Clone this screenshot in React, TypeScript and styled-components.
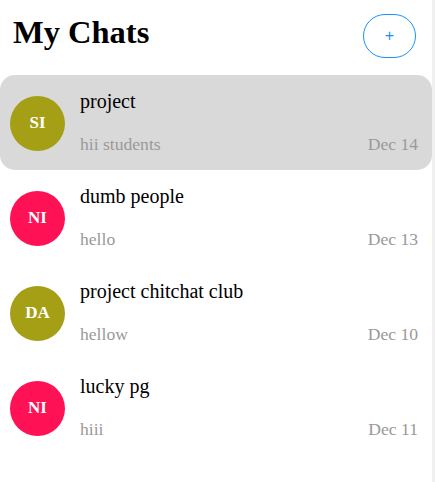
import React from "react";
import styled, { createGlobalStyle } from "styled-components";

const GlobalStyle = createGlobalStyle`
  html, body { margin: 0; padding: 0; background: #fff; }
  body { font-family: "Liberation Serif", "Times New Roman", serif; }
  * { box-sizing: border-box; }
`;

const Panel = styled.div`
  width: 435px;
  height: 482px;
  border-right: 3px solid #f0f0f0;
  display: flex;
  flex-direction: column;
`;

const Header = styled.div`
  height: 75px;
  display: flex;
  justify-content: space-between;
  align-items: flex-start;
  padding: 14px 16px 0 13px;
`;

const Title = styled.h1`
  margin: 0;
  font-size: 32.5px;
  font-weight: bold;
  line-height: 36px;
  color: #000;
`;

const AddButton = styled.button`
  width: 53px;
  height: 44px;
  border: 1px solid #1890ff;
  border-radius: 22px;
  background: #fff;
  color: #1890ff;
  font-family: "Liberation Sans", Arial, sans-serif;
  font-size: 16px;
  line-height: 1;
  padding: 0;
  display: flex;
  align-items: center;
  justify-content: center;
  cursor: pointer;
`;

const List = styled.div`
  display: flex;
  flex-direction: column;
`;

const Row = styled.div<{ $active?: boolean }>`
  height: 95px;
  display: flex;
  align-items: center;
  gap: 15px;
  padding: 15px 14px 16px 10px;
  border-radius: 15px;
  background: ${(p) => (p.$active ? "#d9d9d9" : "transparent")};
`;

const Avatar = styled.div<{ $color: string }>`
  flex: none;
  width: 55px;
  height: 55px;
  margin-top: 2px;
  border-radius: 50%;
  background: ${(p) => p.$color};
  color: #fff;
  font-weight: bold;
  font-size: 17px;
  display: flex;
  align-items: center;
  justify-content: center;
`;

const Content = styled.div`
  flex: 1;
  height: 64px;
  display: flex;
  flex-direction: column;
  justify-content: space-between;
`;

const Name = styled.div`
  font-size: 20px;
  line-height: 22px;
  color: #000;
`;

const Footer = styled.div`
  display: flex;
  justify-content: space-between;
  font-size: 17.6px;
  line-height: 20px;
  color: #999;
`;

const chats = [
  { initials: "SI", color: "#a59f16", name: "project", msg: "hii students", date: "Dec 14", active: true },
  { initials: "NI", color: "#ff1155", name: "dumb people", msg: "hello", date: "Dec 13" },
  { initials: "DA", color: "#a59f16", name: "project chitchat club", msg: "hellow", date: "Dec 10" },
  { initials: "NI", color: "#ff1155", name: "lucky pg", msg: "hiii", date: "Dec 11" },
];

export default function App() {
  return (
    <>
      <GlobalStyle />
      <Panel>
        <Header>
          <Title>My Chats</Title>
          <AddButton>+</AddButton>
        </Header>
        <List>
          {chats.map((c, i) => (
            <Row key={i} $active={c.active}>
              <Avatar $color={c.color}>{c.initials}</Avatar>
              <Content>
                <Name>{c.name}</Name>
                <Footer>
                  <span>{c.msg}</span>
                  <span>{c.date}</span>
                </Footer>
              </Content>
            </Row>
          ))}
        </List>
      </Panel>
    </>
  );
}
